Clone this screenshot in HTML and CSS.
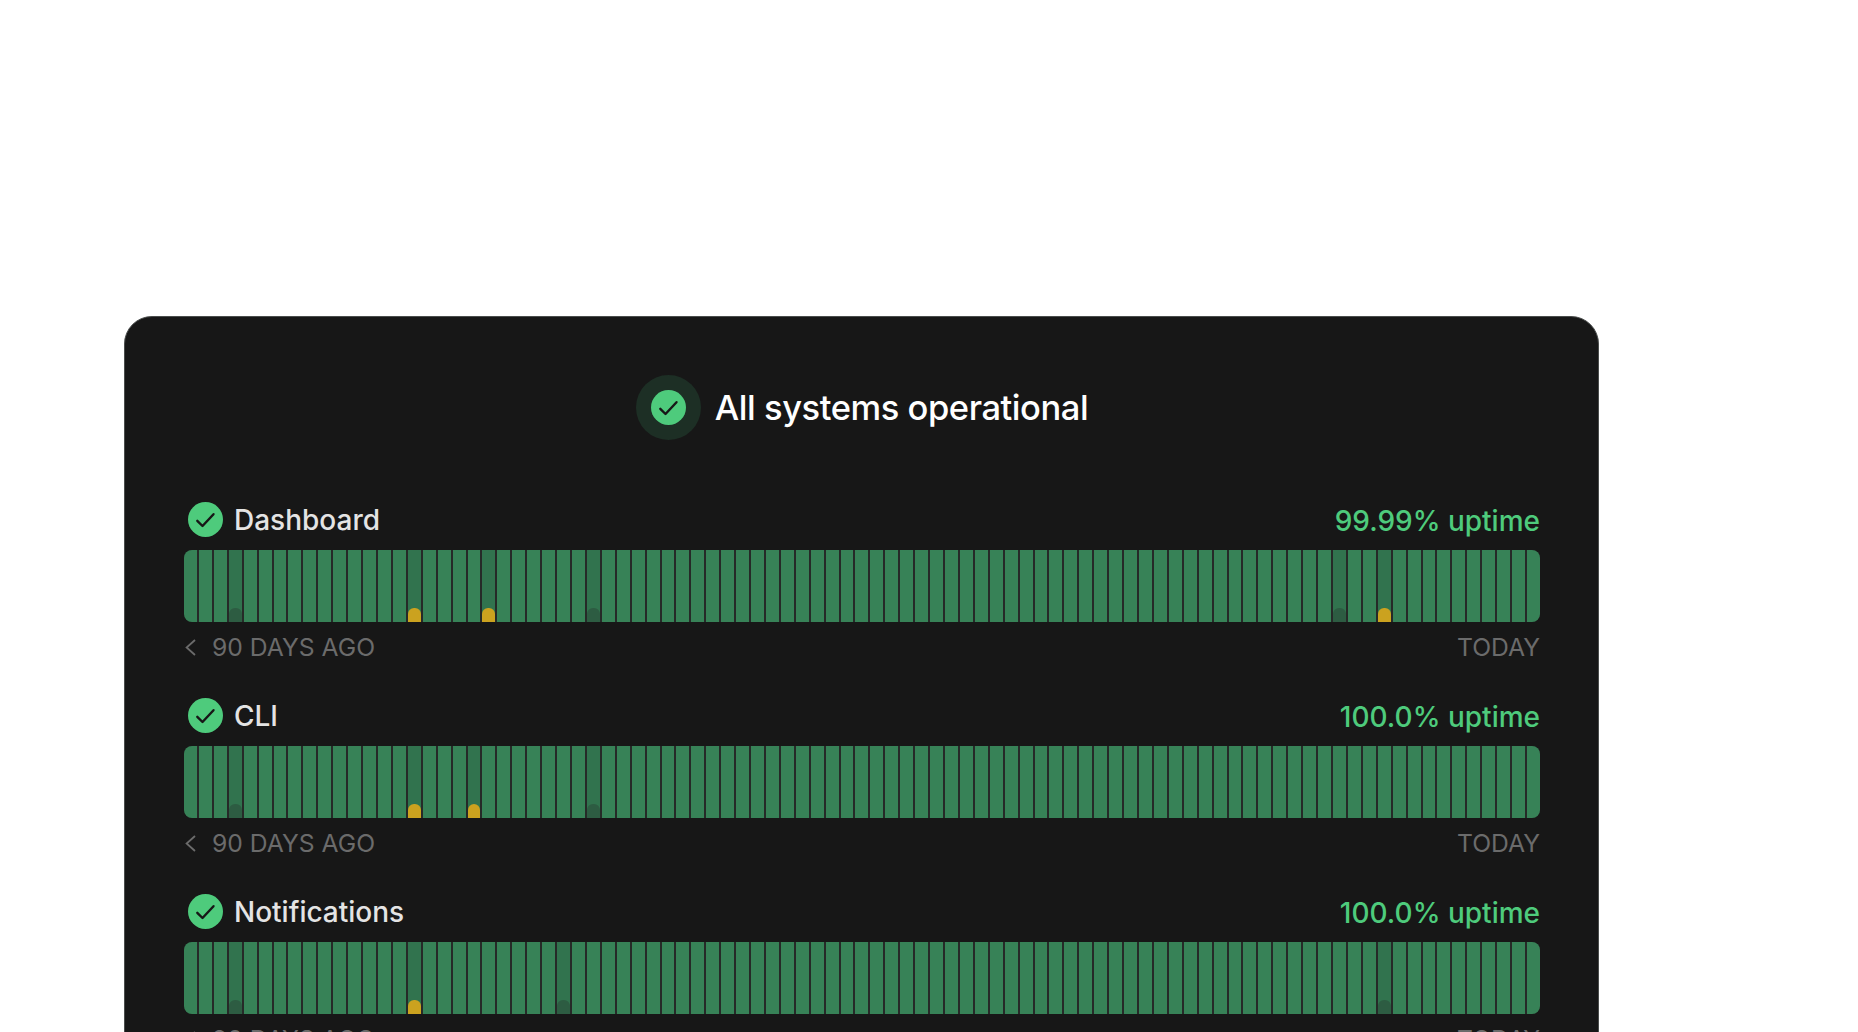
FILE: index.html
```html
<!DOCTYPE html>
<html lang="en">
<head>
	<meta charset="UTF-8">
	<title>Status</title>
	<link rel="stylesheet" href="styles.css">
</head>
<body>
<div class="card">
	<div class="summary">
		<span class="ring">
			<svg class="check" viewBox="0 0 35 35"><circle cx="17.5" cy="17.5" r="17.5" fill="#4ecb7c"/><path d="M9.3 18.8L14.5 24L25.5 12.2" fill="none" stroke="#171717" stroke-width="2.4" stroke-linecap="round" stroke-linejoin="round"/></svg>
		</span>
		<h1>All systems operational</h1>
	</div>

	<div class="service">
		<div class="service_head">
			<svg class="check" viewBox="0 0 35 35"><circle cx="17.5" cy="17.5" r="17.5" fill="#4ecb7c"/><path d="M9.3 18.8L14.5 24L25.5 12.2" fill="none" stroke="#171717" stroke-width="2.4" stroke-linecap="round" stroke-linejoin="round"/></svg>
			<span class="name">Dashboard</span>
			<span class="uptime">99.99% uptime</span>
		</div>
		<div class="bars" data-dark="3,27,77" data-warn="15,20,80"></div>
		<div class="service_foot">
			<span class="ago"><svg class="chevron" viewBox="0 0 11 17"><path d="M10 1L1.6 8.5l8.4 7.5" fill="none" stroke="#6b6b6b" stroke-width="1.8"/></svg>90 DAYS AGO</span>
			<span>TODAY</span>
		</div>
	</div>

	<div class="service">
		<div class="service_head">
			<svg class="check" viewBox="0 0 35 35"><circle cx="17.5" cy="17.5" r="17.5" fill="#4ecb7c"/><path d="M9.3 18.8L14.5 24L25.5 12.2" fill="none" stroke="#171717" stroke-width="2.4" stroke-linecap="round" stroke-linejoin="round"/></svg>
			<span class="name">CLI</span>
			<span class="uptime">100.0% uptime</span>
		</div>
		<div class="bars" data-dark="3,27" data-warn="15,19"></div>
		<div class="service_foot">
			<span class="ago"><svg class="chevron" viewBox="0 0 11 17"><path d="M10 1L1.6 8.5l8.4 7.5" fill="none" stroke="#6b6b6b" stroke-width="1.8"/></svg>90 DAYS AGO</span>
			<span>TODAY</span>
		</div>
	</div>

	<div class="service">
		<div class="service_head">
			<svg class="check" viewBox="0 0 35 35"><circle cx="17.5" cy="17.5" r="17.5" fill="#4ecb7c"/><path d="M9.3 18.8L14.5 24L25.5 12.2" fill="none" stroke="#171717" stroke-width="2.4" stroke-linecap="round" stroke-linejoin="round"/></svg>
			<span class="name">Notifications</span>
			<span class="uptime">100.0% uptime</span>
		</div>
		<div class="bars" data-dark="3,25,80" data-warn="15"></div>
		<div class="service_foot">
			<span class="ago"><svg class="chevron" viewBox="0 0 11 17"><path d="M10 1L1.6 8.5l8.4 7.5" fill="none" stroke="#6b6b6b" stroke-width="1.8"/></svg>90 DAYS AGO</span>
			<span>TODAY</span>
		</div>
	</div>
</div>
<script src="script.js"></script>
</body>
</html>
```

FILE: styles.css
```css
html,body {margin:0; padding:0; height:100%; overflow:hidden; background:#fff;}
body {font-family:Inter,"Liberation Sans",sans-serif;}

.card {width:1475px; margin:316px 0 0 124px; padding:58px 58px 40px 59px; box-sizing:border-box; background:#171717; border:1px solid #4a4d4c; border-radius:28px;}

.summary {display:flex; align-items:center; justify-content:center; gap:14px; margin-bottom:62px;}
.summary h1 {margin:0; padding-bottom:1px; font-size:34.5px; font-weight:500; color:#fff; letter-spacing:-0.45px;}
.ring {width:65px; height:65px; display:flex; align-items:center; justify-content:center; border-radius:50%; background:#1d2f25;}

.check {width:35px; height:35px; flex:none;}

.service {height:196px;}
.service_head {display:flex; align-items:center; height:35px; padding-left:4px; margin-bottom:13px;}
.name {margin-left:11px; font-size:28px; font-weight:500; color:#e4e4e4;}
.uptime {margin-left:auto; padding-top:2px; font-size:28px; font-weight:500; color:#4ecb7c;}

.bars {display:flex; gap:2px; height:72px; background:#262a28; border-radius:8px; overflow:hidden;}
.bar {flex:1; position:relative; background:#378257; overflow:hidden;}
.bar_dark {background:#31734e;}
.bar_dark i,.bar_warn i {position:absolute; left:0; right:0; bottom:0; height:14px; border-radius:6px 6px 0 0;}
.bar_dark i {background:#2d5c42;}
.bar_warn {background:#31734e;}
.bar_warn i {background:#cba21f;}

.service_foot {display:flex; justify-content:space-between; align-items:center; margin-top:10px; font-size:24.7px; color:#6b6b6b;}
.ago {display:flex; align-items:center; gap:16px;}
.chevron {width:11px; height:17px; margin-left:1px;}
```

FILE: script.js
```js
// one bar per day, dark and warn come from the data attributes
var aBars=document.querySelectorAll('.bars');
for(var i=0;i<aBars.length;i++)
{
	var dark=aBars[i].getAttribute('data-dark').split(',');
	var warn=aBars[i].getAttribute('data-warn').split(',');
	for(var d=0;d<91;d++)
	{
		var bar=document.createElement('div');
		bar.className='bar';
		if(dark.indexOf(String(d))!=-1) bar.className+=' bar_dark';
		if(warn.indexOf(String(d))!=-1) bar.className+=' bar_warn';
		if(bar.className!='bar') bar.appendChild(document.createElement('i'));
		aBars[i].appendChild(bar);
	}
}
```
